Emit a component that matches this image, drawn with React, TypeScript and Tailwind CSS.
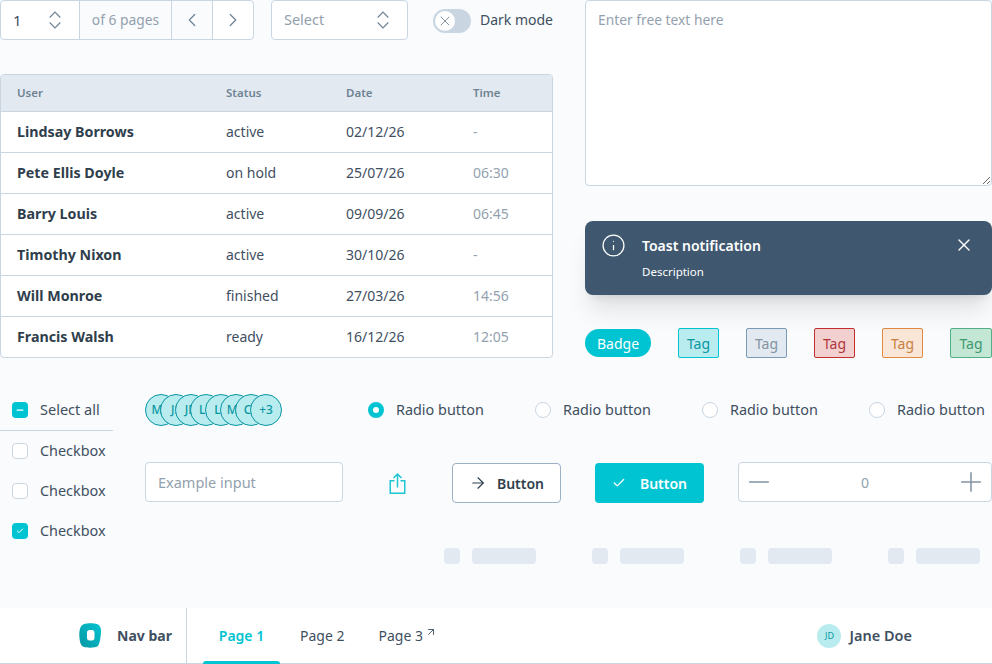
import React from 'react';
import { ChevronLeft, ChevronRight, X, Info, ArrowRight, Check, Minus, Plus, ArrowUpRight } from 'lucide-react';

const USERS = [
  { name: 'Lindsay Borrows', status: 'active', date: '02/12/26', time: '-' },
  { name: 'Pete Ellis Doyle', status: 'on hold', date: '25/07/26', time: '06:30' },
  { name: 'Barry Louis', status: 'active', date: '09/09/26', time: '06:45' },
  { name: 'Timothy Nixon', status: 'active', date: '30/10/26', time: '-' },
  { name: 'Will Monroe', status: 'finished', date: '27/03/26', time: '14:56' },
  { name: 'Francis Walsh', status: 'ready', date: '16/12/26', time: '12:05' },
];

const TAGS = [
  { key: 'teal', cls: 'w-[41px] bg-[#b9ecee] border-[#00c4d1] text-[#0a96a3]' },
  { key: 'gray', cls: 'w-[41px] bg-[#e2e9f0] border-[#7b9ab5] text-[#8394a3]' },
  { key: 'red', cls: 'w-[41px] bg-[#f2d0d0] border-[#c22f2f] text-[#b0353a]' },
  { key: 'orange', cls: 'w-[41px] bg-[#fae6d7] border-[#e08a44] text-[#c9803f]' },
  { key: 'green', cls: 'w-[42px] bg-[#c3e6d5] border-[#4fb184] text-[#3e9a70]' },
];

const Chevrons = () => (
  <svg width="12" height="18" viewBox="0 0 12 18" fill="none" stroke="#6f8394" strokeWidth="1.2">
    <path d="M.7 6.500 6 1l5.300 5.500" />
    <path d="M.7 11.500 6 17l5.300-5.500" />
  </svg>
);

const Skeleton = () => (
  <div className="flex gap-3">
    <div className="w-4 h-4 rounded bg-[#e2e9f0]" />
    <div className="w-16 h-4 rounded bg-[#e2e9f0]" />
  </div>
);

const Radio = ({ checked }: { checked?: boolean }) => (
  <div className="flex items-center gap-3 w-[167px] shrink-0">
    {checked ? (
      <span className="w-4 h-4 rounded-full border-[5px] border-[#00c4d1] bg-white" />
    ) : (
      <span className="w-4 h-4 rounded-full border border-[#c9d6e2] bg-white" />
    )}
    <span className="text-[14.4px] pb-px text-[#3f4f5f]">Radio button</span>
  </div>
);

const Checkbox = ({ checked }: { checked?: boolean }) => (
  <div className="flex items-center gap-3 h-10 pl-3">
    {checked ? (
      <span className="w-4 h-4 rounded bg-[#00c4d1] flex items-center justify-center">
        <Check className="w-2 h-2 text-white" strokeWidth={3} />
      </span>
    ) : (
      <span className="w-4 h-4 rounded border border-[#c9d6e2] bg-white" />
    )}
    <span className="text-[14.4px] pb-px text-[#3f4f5f]">Checkbox</span>
  </div>
);

const App: React.FC = () => {
  return (
    <div className="w-[992px] h-[664px] overflow-hidden flex flex-col bg-[#f9fbfd] text-[14px] font-['Noto_Sans',sans-serif]">
      <div className="flex gap-8 h-[358px]">
        <div className="w-[553px] shrink-0">
          <div className="flex items-center h-10">
            <div className="flex w-[254px] h-10 rounded border border-[#c9d6e2] bg-white overflow-hidden">
              <div className="w-[78px] flex items-center justify-between pl-3 pr-[18px] text-[15px] text-[#3f4f5f]">
                1
                <Chevrons />
              </div>
              <div className="w-[92px] flex items-center justify-center border-l border-[#c9d6e2] bg-[#f9fbfd] text-[13.8px] text-[#93a1ae]">of 6 pages</div>
              <div className="w-[41px] flex items-center justify-center border-l border-[#c9d6e2] bg-[#f9fbfd] text-[#6f8394]">
                <ChevronLeft className="w-[22px] h-[22px]" strokeWidth={1.3} />
              </div>
              <div className="flex-1 flex items-center justify-center border-l border-[#c9d6e2] text-[#6f8394]">
                <ChevronRight className="w-[22px] h-[22px]" strokeWidth={1.3} />
              </div>
            </div>
            <div className="ml-[17px] w-[137px] h-10 rounded border border-[#c9d6e2] bg-white flex items-center justify-between pl-3 pr-[18px] text-[14.5px] text-[#93a1ae]">
              Select
              <Chevrons />
            </div>
            <div className="ml-[25px] w-[38px] h-6 rounded-full bg-[#c9d6e2] p-0.5 mt-0.5">
              <div className="w-5 h-5 rounded-full bg-white flex items-center justify-center text-[#6f8394]">
                <X className="w-4 h-4" strokeWidth={1.3} />
              </div>
            </div>
            <span className="ml-[9px] pb-px text-[#3f4f5f]">Dark mode</span>
          </div>
          <div className="mt-[34px] rounded border border-[#c9d6e2] bg-white overflow-hidden">
            <table className="w-full table-fixed border-collapse">
              <colgroup>
                <col className="w-[209px]" />
                <col className="w-[120px]" />
                <col className="w-[127px]" />
                <col />
              </colgroup>
              <thead>
                <tr className="h-9 bg-[#e2e9f0] text-left text-[11.5px] text-[#6f8394]">
                  <th className="pl-4 font-semibold">User</th>
                  <th className="pl-4 font-semibold">Status</th>
                  <th className="pl-4 font-semibold">Date</th>
                  <th className="pl-4 font-semibold">Time</th>
                </tr>
              </thead>
              <tbody>
                {USERS.map(u => (
                  <tr key={u.name} className="h-[41px] border-t border-[#c9d6e2]">
                    <td className="pl-4 text-[14.25px] font-bold text-[#2f3e4c]">{u.name}</td>
                    <td className="pl-4 text-[#3f4f5f]">{u.status}</td>
                    <td className="pl-4 text-[#3f4f5f]">{u.date}</td>
                    <td className="pl-4 text-[#93a1ae]">{u.time}</td>
                  </tr>
                ))}
              </tbody>
            </table>
          </div>
        </div>
        <div className="flex-1 min-w-0">
          <textarea
            placeholder="Enter free text here"
            className="block w-full h-[186px] rounded border border-[#c9d6e2] bg-white px-3 pt-[9px] text-[13.8px] placeholder:text-[#93a1ae] outline-none"
          />
          <div className="relative mt-[35px] h-[74px] rounded-lg bg-[#3f586f] shadow-xl text-white flex pl-4 pt-3">
            <Info className="w-[25px] h-[25px]" strokeWidth={1.2} />
            <div className="ml-4">
              <div className="pt-0.5 font-semibold">Toast notification</div>
              <div className="mt-[7px] text-[11.5px]">Description</div>
            </div>
            <X className="absolute right-[18px] top-[14px] w-5 h-5" strokeWidth={1.6} />
          </div>
          <div className="mt-[33px] flex items-center h-[30px]">
            <span className="w-[66px] shrink-0 h-7 rounded-full bg-[#00c4d1] text-white flex items-center justify-center">Badge</span>
            <div className="ml-[27px] flex gap-[27px]">
              {TAGS.map(t => (
                <span key={t.key} className={`h-[30px] shrink-0 rounded-[2px] border flex items-center justify-center ${t.cls}`}>Tag</span>
              ))}
            </div>
          </div>
        </div>
      </div>

      <div className="flex mt-[32px] h-[218px]">
        <div className="w-[113px] shrink-0">
          <div className="flex items-center gap-3 h-[41px] pl-3 border-b border-[#c9d6e2]">
            <span className="w-4 h-4 rounded bg-[#00c4d1] flex items-center justify-center">
              <Minus className="w-2.5 h-2.5 text-white" strokeWidth={3} />
            </span>
            <span className="text-[14.5px] pb-px text-[#3f4f5f]">Select all</span>
          </div>
          <Checkbox />
          <Checkbox />
          <Checkbox checked />
        </div>
        <div className="ml-8 flex-1 min-w-0">
          <div className="flex items-center h-10">
            <div className="flex w-[223px] shrink-0">
              {['MB', 'JS', 'JD', 'LK', 'LP', 'MR', 'CT', '+3'].map((l, i) => (
                <span
                  key={i}
                  className="w-8 h-8 -mr-[17px] shrink-0 rounded-full border border-[#0a96a3] bg-[#b9ecee] text-[#0a96a3] text-[12px] font-medium flex items-center justify-center"
                >
                  {l}
                </span>
              ))}
            </div>
            <Radio checked />
            <Radio />
            <Radio />
            <Radio />
          </div>
          <div className="flex items-center mt-[32px] h-10">
            <input
              placeholder="Example input"
              className="w-[198px] h-10 rounded border border-[#c9d6e2] bg-white px-3 text-[14.5px] placeholder:text-[#93a1ae] outline-none"
            />
            <svg className="ml-[46px] mt-0.5 shrink-0" width="17" height="21" viewBox="0 0 17 21" fill="none" stroke="#1fc6d3" strokeWidth="1.5">
              <path d="M5.500 7.750H1.250v12.500h14.500V7.750H11.500" />
              <path d="M8.500 14.500V1.200M4.500 5 8.500 1.100 12.500 5" />
            </svg>
            <button className="ml-[46px] mt-0.5 w-[109px] h-10 rounded border border-[#9bb2c6] bg-white flex items-center justify-center gap-[10px] font-semibold text-[#2f3e4c]">
              <ArrowRight className="w-[18px] h-[18px]" strokeWidth={1.5} />
              Button
            </button>
            <button className="ml-[34px] mt-0.5 w-[109px] h-10 rounded bg-[#00c4d1] flex items-center justify-center gap-[14px] font-semibold text-white">
              <Check className="w-3.5 h-3.5" strokeWidth={2.2} />
              Button
            </button>
            <div className="ml-[34px] w-[254px] h-10 rounded border border-[#c9d6e2] bg-white flex items-center justify-between px-1 text-[#93a1ae]">
              <Minus className="w-8 h-8 text-[#8394a3]" strokeWidth={1.15} />
              0
              <Plus className="w-8 h-8 text-[#8394a3]" strokeWidth={1.15} />
            </div>
          </div>
          <div className="flex gap-[56px] mt-[46px] ml-[299px]">
            <Skeleton />
            <Skeleton />
            <Skeleton />
            <Skeleton />
          </div>
        </div>
      </div>

      <nav className="relative h-14 bg-white border-b border-[#c9d6e2] flex items-stretch shrink-0">
        <div className="w-[187px] border-r border-[#c9d6e2] flex items-center pl-[79px]">
          <svg width="22" height="25" viewBox="0 0 22 25">
            <defs>
              <linearGradient id="logoFill" x1="0" y1="1" x2="1" y2="0">
                <stop offset="0" stopColor="#0a96a3" />
                <stop offset="1" stopColor="#00c4d1" />
              </linearGradient>
            </defs>
            <path
              fillRule="evenodd"
              fill="url(#logoFill)"
              d="M5 1C8 0 15 0 18 1c3 1 4 4 4 7 0 4-1 12-3 15-2 2-11 2-14 1-3-1-4-4-4.500-9C0 10 0 3 5 1Zm5.500 6C9 7 8 8 8 9.500v5.500c0 1.500 1 2.500 2.500 2.500h2.500c1.500 0 2.500-1 2.500-2.500V9.500C15.500 8 14.500 7 13 7Z"
            />
          </svg>
          <span className="ml-4 font-bold text-[#3f4f5f]">Nav bar</span>
        </div>
        <div className="relative w-[77px] ml-4 flex items-center justify-center font-semibold text-[#00c4d1]">
          Page 1
          <span className="absolute left-0 right-0 -bottom-px h-[3px] rounded-t bg-[#00c4d1]" />
        </div>
        <div className="ml-5 flex items-center text-[#3f4f5f]">Page 2</div>
        <div className="ml-[34px] flex items-center text-[#3f4f5f]">
          Page 3
          <ArrowUpRight className="w-3 h-3 ml-0.5 -mt-2" strokeWidth={1.8} />
        </div>
        <div className="ml-auto flex items-center pr-20">
          <span className="w-6 h-6 rounded-full bg-[#b9ecee] text-[#0a96a3] text-[9px] flex items-center justify-center">JD</span>
          <span className="ml-2 text-[14.5px] font-semibold text-[#3f4f5f]">Jane Doe</span>
        </div>
      </nav>
    </div>
  );
};

export default App;
